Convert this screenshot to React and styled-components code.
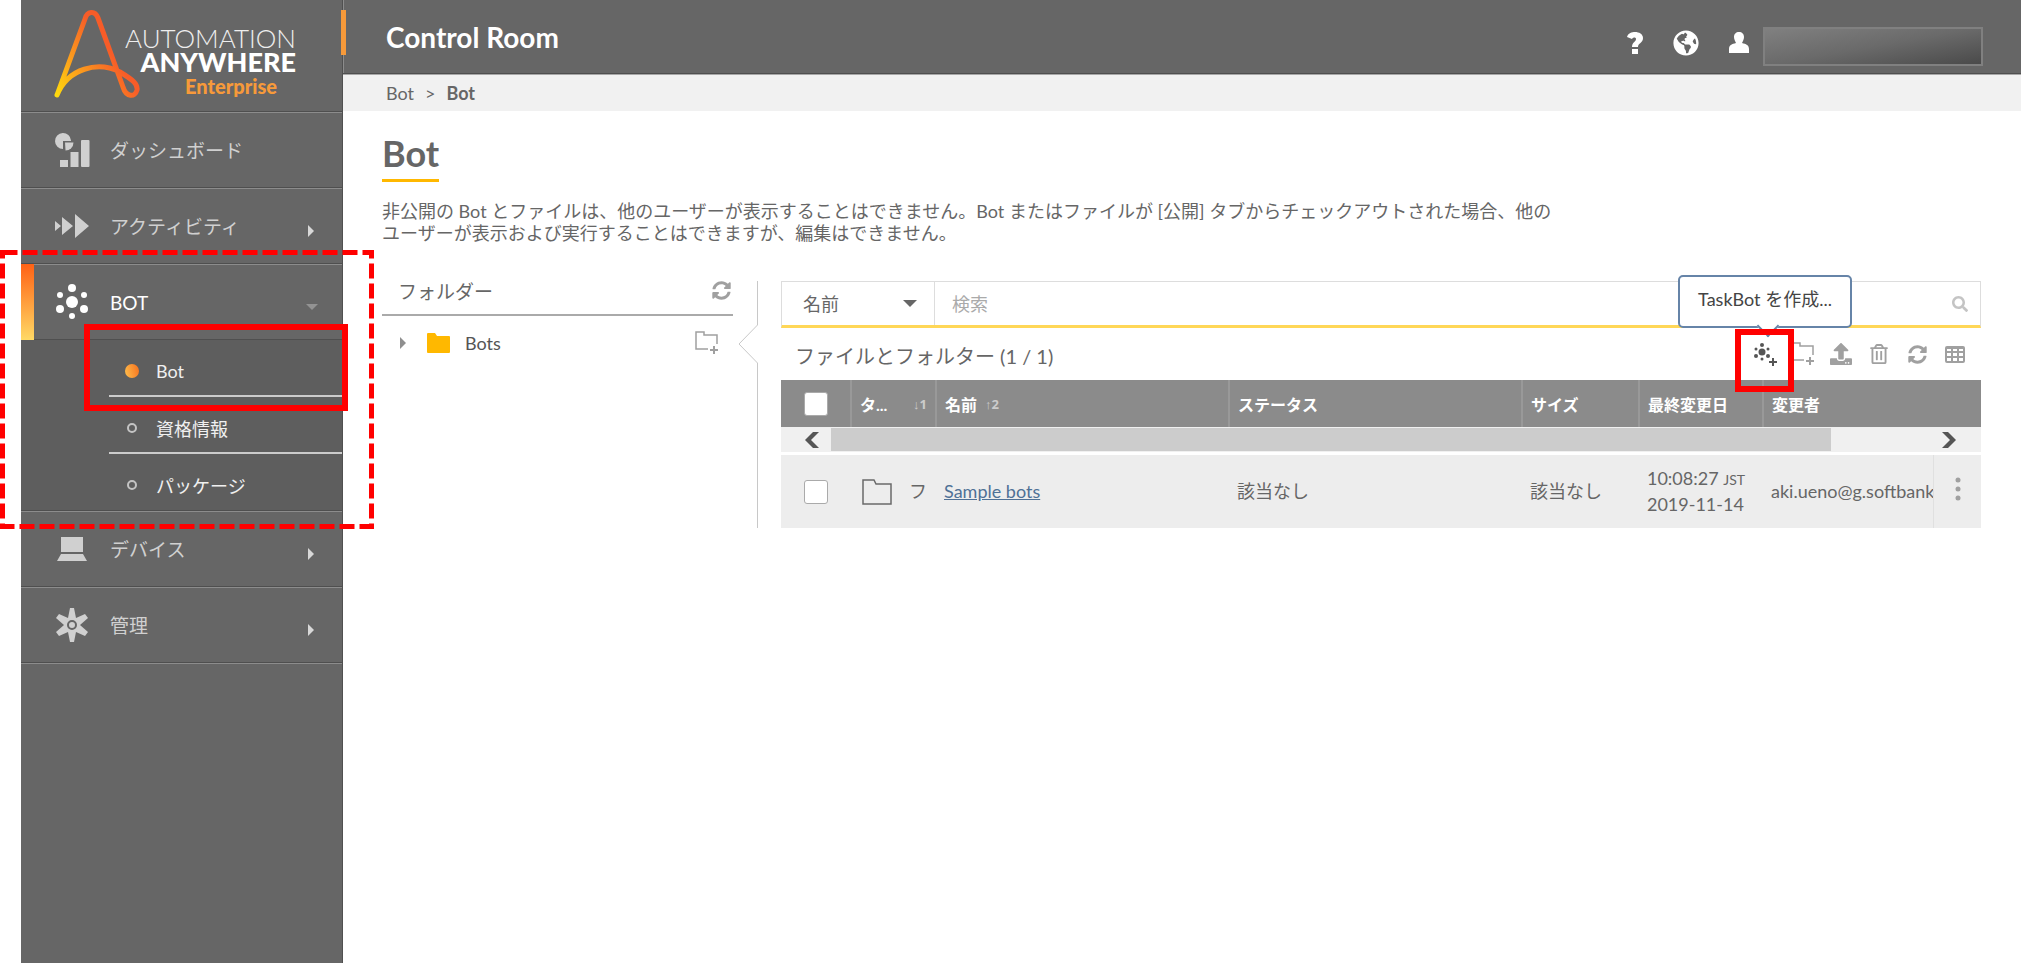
import styled, { createGlobalStyle, css } from 'styled-components'
import { FaSyncAlt, FaSearch, FaRegTrashAlt, FaUpload, FaGlobeAmericas } from 'react-icons/fa'

const menus = [
  { title: 'ダッシュボード', icon: 'dashboard' },
  { title: 'アクティビティ', icon: 'activity', arrow: true },
  { title: 'BOT', icon: 'bot', open: true },
  { title: 'デバイス', icon: 'device', arrow: true },
  { title: '管理', icon: 'admin', arrow: true },
]
const subMenus = ['Bot', '資格情報', 'パッケージ']

const BotShape = () => (
  <>
    <circle cx="18" cy="18" r="6" />
    <circle cx="18" cy="4" r="4" />
    <circle cx="6" cy="11" r="3" />
    <circle cx="30" cy="11" r="3" />
    <circle cx="6" cy="25" r="4" />
    <circle cx="30" cy="25" r="4" />
    <circle cx="18" cy="32" r="3" />
  </>
)

const MenuIcon = ({ name }) => (
  <svg width="36" height="36" viewBox="0 0 36 36" fill="currentColor">
    {name === 'dashboard' && (
      <>
        <path d="M17 8.5A8 8 0 1 0 9 17V9h8z" />
        <path d="M11 10.5h8.5a8 8 0 0 1-8 8z" />
        <rect x="6" y="28" width="8" height="7" />
        <rect x="16.5" y="20" width="8" height="15" />
        <rect x="27" y="8" width="8.5" height="27" rx="1" />
      </>
    )}
    {name === 'activity' && <path d="M1 13l6 5-6 5zM8 9l11 9-11 9zM21 6l14 12-14 12z" />}
    {name === 'bot' && <BotShape />}
    {name === 'device' && <path d="M7 6h22v15H7zM7 23h22l4 7H3z" />}
    {name === 'admin' && (
      <path
        fillRule="evenodd"
        d="M16 1h4l2 10 9-4 3 4-8 7 8 7-3 4-9-4-2 10h-4l-2-10-9 4-3-4 8-7-8-7 3-4 9 4zM18 13a5 5 0 1 0 0 10 5 5 0 0 0 0-10zm0 2a3 3 0 1 1 0 6 3 3 0 0 1 0-6z"
      />
    )}
  </svg>
)

const LogoMark = () => (
  <svg width="86" height="90" viewBox="0 0 86 90" fill="none" strokeWidth="5" strokeLinecap="round" strokeLinejoin="round">
    <defs>
      <linearGradient id="mark" gradientUnits="userSpaceOnUse" x1="0" y1="85" x2="58" y2="45">
        <stop offset="0" stopColor="#ffdd0d" />
        <stop offset="0.5" stopColor="#fb9a1d" />
        <stop offset="1" stopColor="#f75c28" />
      </linearGradient>
    </defs>
    <path
      stroke="url(#mark)"
      d="M3 86L31 10C33 2 41 1 44 9L69 78C72 88 81 89 83 81C84 75 79 71 66 63C44 52 14 59 3 86"
    />
  </svg>
)

const FolderAdd = () => (
  <svg width="24" height="24" viewBox="0 0 24 24" fill="none" stroke="currentColor" strokeWidth="1.5">
    <path d="M13 18H1V1h8v3h13v9" />
    <path d="M19 15v8M15 19h8" strokeWidth="2" />
  </svg>
)

const BotAdd = () => (
  <svg width="24" height="24" viewBox="0 0 24 24" fill="currentColor">
    <circle cx="9" cy="10" r="3.5" />
    <circle cx="9" cy="3" r="2" />
    <circle cx="3" cy="7" r="1.5" />
    <circle cx="15" cy="7" r="1.5" />
    <circle cx="3" cy="14" r="2" />
    <circle cx="15" cy="14" r="2" />
    <circle cx="9" cy="17" r="1.5" />
    <path d="M19 16h2v3h3v2h-3v3h-2v-3h-3v-2h3z" />
  </svg>
)

const App = () => {
  return (
    <Page>
      <GlobalStyle />
      <SideBar>
        <Logo href="#">
          <LogoMark />
          <LogoText>
            <Light>AUTOMATION</Light>
            <Heavy>ANYWHERE</Heavy>
            <Edition>Enterprise</Edition>
          </LogoText>
        </Logo>
        <nav>
          {menus.map((menu) => (
            <div key={menu.title}>
              <MenuItem href="#" $open={menu.open}>
                <MenuIcon name={menu.icon} />
                <span>{menu.title}</span>
                {menu.arrow && <Caret $dir="right" />}
                {menu.open && <Caret $dir="down" />}
              </MenuItem>
              {menu.open && (
                <SubMenu>
                  {subMenus.map((sub, i) => (
                    <SubItem href="#" key={sub}>
                      <Dot $active={i === 0} />
                      {sub}
                      {i === 0 && <ItemFrame />}
                    </SubItem>
                  ))}
                  <DashedFrame width="374" height="279" aria-hidden="true">
                    <rect x="2.5" y="2.5" width="369" height="274" />
                  </DashedFrame>
                </SubMenu>
              )}
            </div>
          ))}
        </nav>
      </SideBar>

      <Main>
        <Header>
          <Brand>Control Room</Brand>
          <HeaderButton aria-label="ヘルプ">
            <svg width="16" height="22" viewBox="0 0 16 22" fill="currentColor">
              <path d="M0 5C1 1 5 0 8 0c4 0 8 2 8 6 0 5-5 5-5 9H5c0-5 4-5 4-8 0-2-3-2-4 0zM5 17h6v5H5z" />
            </svg>
          </HeaderButton>
          <HeaderButton aria-label="言語">
            <FaGlobeAmericas size={26} />
          </HeaderButton>
          <HeaderButton aria-label="ユーザー">
            <svg width="20" height="22" viewBox="0 0 20 22" fill="currentColor">
              <path d="M10 0c3 0 5 2 5 5 0 2-1 4-2 6 4 1 7 2 7 6v4H0v-4c0-4 3-5 7-6-1-2-2-4-2-6 0-3 2-5 5-5z" />
            </svg>
          </HeaderButton>
          <UserBox />
        </Header>
        <Breadcrumb>
          <a href="#">Bot</a>
          <span>&gt;</span>
          <b>Bot</b>
        </Breadcrumb>

        <Content>
          <Title>Bot</Title>
          <Description>
            非公開の Bot とファイルは、他のユーザーが表示することはできません。Bot またはファイルが [公開] タブからチェックアウトされた場合、他のユーザーが表示および実行することはできますが、編集はできません。
          </Description>

          <Columns>
            <Folders>
              <FoldersHead>
                <h2>フォルダー</h2>
                <IconButton aria-label="更新">
                  <FaSyncAlt size={19} />
                </IconButton>
              </FoldersHead>
              <FolderRow>
                <Caret $dir="right" $color="#8f8f8f" />
                <svg width="23" height="20" viewBox="0 0 23 20" fill="#ffb800">
                  <path d="M0 1a1 1 0 0 1 1-1h7l2 3h12a1 1 0 0 1 1 1v15a1 1 0 0 1-1 1H1a1 1 0 0 1-1-1z" />
                </svg>
                <span>Bots</span>
                <IconButton aria-label="フォルダーを作成">
                  <FolderAdd />
                </IconButton>
              </FolderRow>
            </Folders>

            <Splitter>
              <i />
              <svg width="20" height="38" viewBox="0 0 20 38" fill="none" stroke="#c8c8c8">
                <path d="M19.5 0L1 19l18.5 19" />
              </svg>
              <i />
            </Splitter>

            <Files>
              <SearchBar>
                <SelectBox>
                  <select aria-label="検索対象" defaultValue="name">
                    <option value="name">名前</option>
                  </select>
                  <Caret $dir="down" $size={7} $color="#666" />
                </SelectBox>
                <input type="text" aria-label="検索" placeholder="検索" />
                <IconButton aria-label="検索する" $color="#c4c4c4">
                  <FaSearch size={16} />
                </IconButton>
              </SearchBar>

              <ToolBar>
                <h2>ファイルとフォルター (1 / 1)</h2>
                <ToolWrap>
                  <IconButton aria-label="TaskBot を作成" $color="#555">
                    <BotAdd />
                  </IconButton>
                  <Tooltip role="tooltip">TaskBot を作成...</Tooltip>
                  <ToolFrame />
                </ToolWrap>
                <IconButton aria-label="フォルダーを作成">
                  <FolderAdd />
                </IconButton>
                <IconButton aria-label="アップロード">
                  <FaUpload size={22} />
                </IconButton>
                <IconButton aria-label="削除">
                  <FaRegTrashAlt size={20} />
                </IconButton>
                <IconButton aria-label="更新">
                  <FaSyncAlt size={19} />
                </IconButton>
                <IconButton aria-label="列">
                  <svg width="20" height="17" viewBox="0 0 20 17" fill="none" stroke="currentColor" strokeWidth="2">
                    <rect x="1" y="1" width="18" height="15" rx="1" />
                    <path d="M7 1v15M13 1v15M1 6h18M1 11h18M1 2h18" />
                  </svg>
                </IconButton>
              </ToolBar>

              <Table>
                <colgroup>
                  <col width="70" />
                  <col width="85" />
                  <col />
                  <col />
                  <col width="117" />
                  <col width="124" />
                  <col width="171" />
                  <col width="47" />
                </colgroup>
                <thead>
                  <tr>
                    <CheckHead>
                      <Check type="checkbox" aria-label="すべて選択" />
                    </CheckHead>
                    <Head>
                      <HeadLabel $spread>
                        タ...<Sort>↓1</Sort>
                      </HeadLabel>
                    </Head>
                    <Head>
                      <HeadLabel>
                        名前<Sort>↑2</Sort>
                      </HeadLabel>
                    </Head>
                    <Head>ステータス</Head>
                    <Head>サイズ</Head>
                    <Head>最終変更日</Head>
                    <Head colSpan="2">変更者</Head>
                  </tr>
                </thead>
                <tbody>
                  <tr>
                    <ScrollCell colSpan="8">
                      <Scroll>
                        <button aria-label="左へ">
                          <svg width="14" height="16" viewBox="0 0 14 16" fill="currentColor">
                            <path d="M8 0h6L6 8l8 8H8L0 8z" />
                          </svg>
                        </button>
                        <Track>
                          <Thumb />
                        </Track>
                        <button aria-label="右へ">
                          <svg width="14" height="16" viewBox="0 0 14 16" fill="currentColor">
                            <path d="M6 0H0l8 8-8 8h6l8-8z" />
                          </svg>
                        </button>
                      </Scroll>
                    </ScrollCell>
                  </tr>
                  <tr>
                    <CheckCell>
                      <Check type="checkbox" aria-label="Sample bots" />
                    </CheckCell>
                    <Cell>
                      <FolderType>
                        <svg width="30" height="26" viewBox="0 0 30 26" fill="none" stroke="#6a6a6a" strokeWidth="1.5">
                          <path d="M1 1h11l2 4h15v20H1z" />
                        </svg>
                        フ
                      </FolderType>
                    </Cell>
                    <Cell>
                      <a href="#">Sample bots</a>
                    </Cell>
                    <Cell>該当なし</Cell>
                    <Cell>該当なし</Cell>
                    <Cell>
                      10:08:27 <small>JST</small>
                      <br />
                      2019-11-14
                    </Cell>
                    <Cell>aki.ueno@g.softbank</Cell>
                    <MoreCell>
                      <button aria-label="メニュー">
                        <svg width="6" height="24" viewBox="0 0 6 24" fill="#a0a0a0">
                          <circle cx="3" cy="3" r="2.5" />
                          <circle cx="3" cy="12" r="2.5" />
                          <circle cx="3" cy="21" r="2.5" />
                        </svg>
                      </button>
                    </MoreCell>
                  </tr>
                </tbody>
              </Table>
            </Files>
          </Columns>
        </Content>
      </Main>
    </Page>
  )
}

const GlobalStyle = createGlobalStyle`
  * {
    box-sizing: border-box;
  }
  body {
    margin: 0;
    background: #fff;
    color: #666;
    font-family: Lato, "Noto Sans CJK JP", sans-serif;
    font-size: 18px;
  }
  button, input, select {
    font: inherit;
    color: inherit;
    border: 0;
    padding: 0;
    background: none;
  }
  h1, h2, p {
    margin: 0;
  }
  svg {
    display: block;
    flex: none;
  }
`

const Page = styled.div`
  display: flex;
  min-height: 100vh;
  padding-left: 21px;
`

const groove = css`
  border-bottom: 1px solid #4f4f4f;
  box-shadow: 0 1px 0 #8c8c8c;
`

const SideBar = styled.aside`
  flex: none;
  width: 322px;
  background: #666;
  border-right: 1px solid #505050;
`
const Logo = styled.a`
  display: flex;
  height: 112px;
  padding: 9px 46px 0 33px;
  text-decoration: none;
  ${groove}
`
const LogoText = styled.div`
  flex: 1;
  display: flex;
  flex-direction: column;
  align-items: flex-end;
  margin-left: -20px;
  padding-top: 17px;
  line-height: 24px;
`
const Light = styled.span`
  color: #eee;
  font-size: 26px;
  font-weight: 300;
`
const Heavy = styled.span`
  color: #fff;
  font-size: 27px;
  font-weight: 900;
`
const Edition = styled.span`
  padding-right: 19px;
  color: #f79a3a;
  font-size: 20px;
  font-weight: 900;
`

const Caret = styled.i`
  flex: none;
  width: 0;
  height: 0;
  ${({ $dir, $color = '#d8d8d8', $size = 6 }) =>
    $dir === 'right'
      ? css`
          border: ${$size}px solid transparent;
          border-left-color: ${$color};
          border-right-width: 0;
        `
      : css`
          border: ${$size}px solid transparent;
          border-top-color: ${$color};
          border-bottom-width: 0;
        `}
`
const MenuItem = styled.a`
  display: flex;
  align-items: center;
  height: 76px;
  padding: 0 28px 0 33px;
  color: ${({ $open }) => ($open ? '#fff' : '#d0d0d0')};
  font-size: 19px;
  text-decoration: none;
  ${groove}
  ${({ $open }) =>
    $open &&
    css`
      padding: 0 24px 0 20px;
      border: solid;
      border-image: linear-gradient(#ff6014, #ffdb66) 1;
      border-width: 0 0 0 13px;
      box-shadow: inset 0 -1px 0 #4f4f4f;
    `}
  span {
    flex: 1;
    margin-left: 20px;
  }
  ${Caret} {
    margin-top: 10px;
    opacity: ${({ $open }) => ($open ? 0.4 : 1)};
  }
`
const SubMenu = styled.div`
  position: relative;
  padding-left: 88px;
  background: #5e5e5e;
  ${groove}
`
const SubItem = styled.a`
  position: relative;
  display: flex;
  align-items: center;
  gap: 17px;
  height: 57px;
  padding: 6px 0 0 16px;
  color: #f0f0f0;
  text-decoration: none;
  border-bottom: 2px solid #ccc;
  &:nth-child(3) {
    height: 56px;
    border-bottom: 0;
  }
`
const Dot = styled.i`
  width: ${({ $active }) => ($active ? 14 : 10)}px;
  height: ${({ $active }) => ($active ? 14 : 10)}px;
  margin: ${({ $active }) => ($active ? 0 : '0 2px')};
  border-radius: 50%;
  ${({ $active }) =>
    $active
      ? css`
          background: linear-gradient(75deg, #ffc04d, #f7701d);
        `
      : css`
          border: 2px solid #c4c4c4;
        `}
`
const ItemFrame = styled.div`
  position: absolute;
  inset: -16px -6px -16px -25px;
  z-index: 2;
  border: 6px solid #f00;
  pointer-events: none;
`
const DashedFrame = styled.svg`
  position: absolute;
  left: -21px;
  bottom: -19px;
  z-index: 2;
  fill: none;
  stroke: #f00;
  stroke-width: 5px;
  stroke-dasharray: 15 5;
  pointer-events: none;
`

const Main = styled.main`
  flex: 1;
  min-width: 0;
`
const Header = styled.header`
  position: relative;
  display: flex;
  align-items: center;
  height: 74px;
  padding: 13px 38px 0 43px;
  background: #666;
  border-bottom: 1px solid #4f4f4f;
  box-shadow: inset 1px 0 0 #8c8c8c;
  color: #fff;
  &::before {
    content: '';
    position: absolute;
    left: -2px;
    top: 10px;
    width: 5px;
    height: 45px;
    background: #f79a3a;
  }
`
const Brand = styled.div`
  flex: 1;
  padding-bottom: 12px;
  font-size: 28px;
  font-weight: 700;
`
const HeaderButton = styled.button`
  margin-right: 30px;
  & + & + & {
    margin-right: 14px;
  }
`
const UserBox = styled.div`
  width: 220px;
  height: 39px;
  margin-top: 6px;
  background: linear-gradient(170deg, #808080, #6a6a6a 50%, #4a4a4a);
  border: 2px solid #808080;
`
const Breadcrumb = styled.div`
  display: flex;
  align-items: center;
  gap: 11px;
  height: 37px;
  padding-left: 43px;
  background: #f1f1f1;
  border-top: 1px solid #a8a8a8;
  a {
    color: inherit;
    text-decoration: none;
  }
`
const Content = styled.div`
  padding: 21px 40px 0 39px;
`
const Title = styled.h1`
  width: max-content;
  padding-bottom: 5px;
  border-bottom: 3px solid #ffb800;
  font-size: 36px;
  line-height: 42px;
`
const Description = styled.p`
  max-width: 1176px;
  margin: 18px 0 37px;
  line-height: 22px;
`
const Columns = styled.div`
  display: flex;
`
const Folders = styled.section`
  width: 351px;
`
const FoldersHead = styled.div`
  display: flex;
  align-items: center;
  justify-content: space-between;
  height: 35px;
  padding: 0 0 14px 16px;
  border-bottom: 2px solid #aaa;
  h2 {
    font-size: 19px;
    font-weight: 400;
  }
`
const FolderRow = styled.div`
  display: flex;
  align-items: center;
  height: 54px;
  padding: 0 14px 0 18px;
  svg {
    margin-left: 21px;
  }
  span {
    flex: 1;
    margin-left: 15px;
    color: #555;
  }
`
const IconButton = styled.button`
  display: flex;
  align-items: center;
  justify-content: center;
  width: 24px;
  color: ${({ $color = '#a0a0a0' }) => $color};
  && svg {
    margin: 0;
  }
`
const Splitter = styled.div`
  display: flex;
  flex-direction: column;
  align-items: flex-end;
  width: 25px;
  i {
    width: 1px;
    height: 44px;
    background: #c8c8c8;
  }
  i:last-child {
    flex: 1;
  }
`
const Files = styled.section`
  flex: 1;
  min-width: 0;
  margin-left: 23px;
`
const SearchBar = styled.div`
  display: flex;
  height: 47px;
  border: 1px solid #ddd;
  border-bottom: 3px solid #ffd757;
  input {
    flex: 1;
    min-width: 0;
    padding: 0 17px;
    outline: 0;
  }
  input::placeholder {
    color: #aaa;
    opacity: 1;
  }
  ${IconButton} {
    margin-right: 8px;
  }
`
const SelectBox = styled.div`
  display: flex;
  align-items: center;
  width: 153px;
  padding: 0 17px 0 21px;
  border-right: 1px solid #ddd;
  select {
    flex: 1;
    appearance: none;
    outline: 0;
  }
`
const ToolBar = styled.div`
  display: flex;
  align-items: center;
  gap: 14px;
  height: 52px;
  padding: 0 14px;
  h2 {
    flex: 1;
    padding-top: 2px;
    font-size: 20px;
    font-weight: 400;
  }
`
const ToolWrap = styled.div`
  position: relative;
`
const Tooltip = styled.div`
  position: absolute;
  right: -75px;
  bottom: 38px;
  width: 174px;
  height: 53px;
  line-height: 44px;
  text-align: center;
  color: #444;
  background: #fff;
  border: 2px solid #6684a8;
  border-radius: 5px;
  &::after {
    content: '';
    position: absolute;
    left: 80px;
    bottom: -8px;
    width: 14px;
    height: 14px;
    background: #fff;
    border: solid #6684a8;
    border-width: 0 2px 2px 0;
    transform: rotate(45deg);
  }
`
const ToolFrame = styled.div`
  position: absolute;
  left: -18px;
  top: -13px;
  width: 59px;
  height: 63px;
  border: 6px solid #f00;
  pointer-events: none;
`

const Table = styled.table`
  width: 100%;
  table-layout: fixed;
  border-collapse: collapse;
`
const Head = styled.th`
  height: 47px;
  padding: 0 8px;
  background: #8b8b8b;
  border-left: 2px solid #999;
  color: #fff;
  font-size: 16px;
  text-align: left;
`
const CheckHead = styled(Head)`
  padding: 0 0 0 23px;
  border-left: 0;
`
const HeadLabel = styled.div`
  display: flex;
  align-items: center;
  justify-content: ${({ $spread }) => ($spread ? 'space-between' : 'flex-start')};
  gap: 8px;
`
const Sort = styled.span`
  color: #ccc;
  font-family: "Open Sans", "Liberation Sans", sans-serif;
  font-size: 13px;
`
const Check = styled.input`
  display: block;
  appearance: none;
  width: 24px;
  height: 24px;
  margin: 0;
  background: #fff;
  border: 1px solid #aaa;
  border-radius: 3px;
`
const ScrollCell = styled.td`
  height: 28px;
  padding: 0;
  vertical-align: top;
`
const Scroll = styled.div`
  display: flex;
  height: 25px;
  padding: 1px 0;
  background: #f0f0f0;
  button {
    display: flex;
    align-items: center;
    width: 50px;
    padding-left: 24px;
    color: #555;
  }
  button:last-child {
    width: 63px;
  }
`
const Track = styled.div`
  flex: 1;
`
const Thumb = styled.div`
  width: 92%;
  height: 100%;
  background: #ccc;
`
const Cell = styled.td`
  height: 73px;
  padding: 0 0 0 8px;
  background: #ededed;
  line-height: 25px;
  white-space: nowrap;
  overflow: hidden;
  a {
    color: #4f7196;
  }
  small {
    font-size: 14px;
  }
`
const CheckCell = styled(Cell)`
  padding-left: 23px;
`
const MoreCell = styled(Cell)`
  padding-left: 21px;
  border-left: 1px solid #e0e0e0;
`
const FolderType = styled.div`
  display: flex;
  align-items: center;
  gap: 17px;
  padding-left: 3px;
`

export default App
